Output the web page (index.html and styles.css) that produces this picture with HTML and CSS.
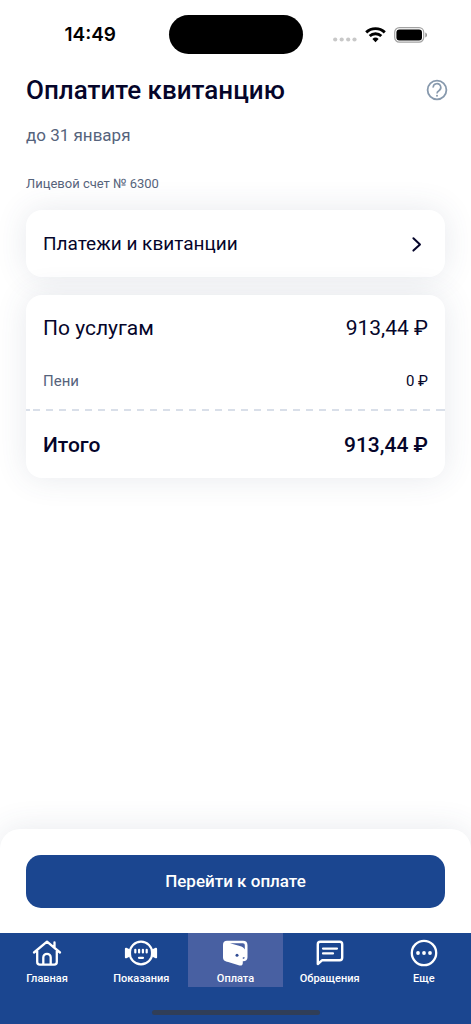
FILE: index.html
```html
<!DOCTYPE html>
<html lang="ru">
<head>
<meta charset="utf-8">
<meta name="viewport" content="width=device-width, initial-scale=1">
<title>Оплата</title>
<link rel="stylesheet" href="styles.css">
</head>
<body>
<div class="app">
  <div class="status">
    <time class="status-time">14:49</time>
    <div class="island"></div>
    <div class="status-icons">
      <svg class="signal" width="24" height="5" viewBox="0 0 24 5" aria-hidden="true"><circle cx="2.2" cy="2.5" r="2.1"/><circle cx="8.7" cy="2.5" r="2.1"/><circle cx="15.2" cy="2.5" r="2.1"/><circle cx="21.5" cy="2.5" r="2.1"/></svg>
      <svg width="21" height="16" viewBox="0 0 21 16" fill="none" stroke="#000" stroke-width="2.9" aria-hidden="true"><path d="M1.2 5.4a13.4 13.4 0 0 1 18.6 0"/><path d="M4.7 9a8.5 8.5 0 0 1 11.6 0"/><path d="M10.5 15.2 7.4 12a4.6 4.6 0 0 1 6.2 0z" fill="#000" stroke="none"/></svg>
      <svg width="34" height="16" viewBox="0 0 34 16" aria-hidden="true"><rect x=".7" y=".7" width="29" height="14.4" rx="4.6" fill="#fff" stroke="#a2a2a2" stroke-width="1.2"/><rect x="2.4" y="2.4" width="25.6" height="11" rx="3" fill="#000"/><path d="M31.3 5.4c2.3.8 2.3 4.2 0 5z" fill="#929292"/></svg>
    </div>
  </div>

  <main class="content">
    <header class="heading">
      <h1>Оплатите квитанцию</h1>
      <button class="help" type="button" aria-label="Помощь">
        <svg width="22" height="22" viewBox="0 0 22 22" fill="none" stroke="#8799ad" aria-hidden="true"><circle cx="11" cy="11" r="9.4" stroke-width="1.8"/><path d="M7.2 8.6a3.8 3.8 0 1 1 5.7 3.1c-1.3.8-1.9 1.3-1.9 2.8" stroke-width="1.6"/><circle cx="11" cy="16.7" r="1" fill="#8799ad" stroke="none"/></svg>
      </button>
    </header>
    <p class="due">до 31 января</p>
    <p class="account">Лицевой счет № 6300</p>

    <button class="card card-link" type="button">
      <span>Платежи и квитанции</span>
      <svg width="20" height="20" viewBox="0 0 20 20" fill="none" stroke="#05052a" stroke-width="2" stroke-linecap="round" stroke-linejoin="round" aria-hidden="true"><path d="m6.4 4.2 6.6 6.2-6.6 6.2"/></svg>
    </button>

    <dl class="card summary">
      <div class="row row-services"><dt>По услугам</dt><dd>913,44 ₽</dd></div>
      <div class="row row-fine"><dt>Пени</dt><dd>0 ₽</dd></div>
      <div class="divider"></div>
      <div class="row row-total"><dt>Итого</dt><dd>913,44 ₽</dd></div>
    </dl>
  </main>

  <div class="action">
    <button class="pay" type="button">Перейти к оплате</button>
  </div>

  <nav class="tabs">
    <div class="tab-list">
      <a class="tab" href="#home">
        <svg width="30" height="28" viewBox="0 0 30 28" fill="none" stroke="#fff" stroke-width="2.3" stroke-linecap="round" stroke-linejoin="round" aria-hidden="true"><path d="M2 13.5 15 2.6l13 10.9M22.5 8V3.5M5.2 12v11c0 1.700.9 2.600 2.600 2.600h14.400c1.700 0 2.600-.9 2.600-2.600V12M11.300 25.500v-7a3.700 3.700 0 0 1 7.400 0v7"/></svg>
        <span>Главная</span>
      </a>
      <a class="tab" href="#meters">
        <svg width="34" height="28" viewBox="0 0 34 28" fill="none" stroke="#fff" stroke-width="2.2" stroke-linecap="round" stroke-linejoin="round" aria-hidden="true"><circle cx="17" cy="14" r="11.3"/><path d="m2 9.8 4 2v4.4l-4 2zM32 9.8l-4 2v4.4l4 2z" fill="#fff"/><path d="M11.3 10.8v2.6M15.1 10.8v2.6M18.9 10.8v2.6M22.7 10.8v2.6M15 18.8h4"/></svg>
        <span>Показания</span>
      </a>
      <a class="tab tab-active" href="#payment" aria-current="page">
        <svg width="28" height="28" viewBox="0 0 28 28" aria-hidden="true"><path d="M6 1.8h16c2.900 0 4.500 1.500 4.500 4.400v12c0 2.700-1.600 4-4.400 4H5.600C3.300 22.200 2 20.600 2 18.400V5.800c0-2.500 1.500-4 4-4z" fill="#fff"/><path d="M9 4.200h12.600c1.600 0 2.200.8 2.200 2.200v4c-1-2.100-2.700-2.900-5-3.500z" fill="#4860a2"/><path d="M21.800 18.300h1.900c0 1.200-.5 1.700-1.900 1.700z" fill="#4860a2"/><path d="M19 22h7v4h-4.500z" fill="none"/><path d="M3 20h18.800v3.900c0 2-1.400 3.100-3.300 2.500L4.700 22.300z" fill="#fff"/><circle cx="16" cy="16.200" r="1.500" fill="#304c94"/></svg>
        <span>Оплата</span>
      </a>
      <a class="tab" href="#requests">
        <svg width="30" height="28" viewBox="0 0 30 28" fill="none" stroke="#fff" stroke-width="2.4" stroke-linecap="round" stroke-linejoin="round" aria-hidden="true"><path d="M2.800 25V5.200c0-1.700.9-2.500 2.500-2.500h19.400c1.600 0 2.500.8 2.500 2.500v13.600c0 1.700-.9 2.500-2.500 2.500H7z"/><path d="M8 9.600h14M8 14.400h10" stroke-width="2.2"/></svg>
        <span>Обращения</span>
      </a>
      <a class="tab" href="#more">
        <svg width="28" height="28" viewBox="0 0 28 28" fill="#fff" aria-hidden="true"><circle cx="14" cy="14" r="12.2" fill="none" stroke="#fff" stroke-width="2.3"/><circle cx="8" cy="14" r="1.9"/><circle cx="14" cy="14" r="1.9"/><circle cx="20" cy="14" r="1.9"/></svg>
        <span>Еще</span>
      </a>
    </div>
    <div class="home-indicator"></div>
  </nav>
</div>
</body>
</html>
```
FILE: styles.css
```css
* {
  box-sizing: border-box;
}

body {
  margin: 0;
  background: #fff;
  color: #05052a;
  font-family: Roboto, "Noto Sans", sans-serif;
}

button {
  border: 0;
  font: inherit;
  color: inherit;
  cursor: pointer;
}

svg {
  display: block;
}

.app {
  display: flex;
  flex-direction: column;
  min-height: 100vh;
}

.status {
  display: grid;
  grid-template-columns: 1fr auto 1fr;
  align-items: center;
  padding: 15px 0 0;
}

.status-time {
  padding-left: 12px;
  text-align: center;
  font: 600 19px/24px Inter, sans-serif;
  color: #000;
}

.island {
  width: 134px;
  height: 39px;
  border-radius: 20px;
  background: #000;
}

.status-icons {
  display: flex;
  align-items: center;
  justify-content: center;
  gap: 8px;
  padding-right: 12px;
}

.signal {
  margin-top: 10px;
  fill: #c8c8c8;
}

.content {
  flex: 1;
  padding: 18px 26px 40px;
}

.heading {
  display: flex;
  align-items: center;
  justify-content: space-between;
  margin-right: -3px;
}

h1 {
  margin: 0;
  font-size: 26px;
  line-height: 36px;
  font-weight: 500;
}

.help {
  padding: 0;
  background: none;
}

.due {
  margin: 15px 0 0;
  font-size: 17px;
  line-height: 24px;
  color: #56637c;
}

.account {
  margin: 28px 0 0;
  font-size: 13px;
  line-height: 18px;
  color: #56637c;
}

.card {
  width: 100%;
  border-radius: 16px;
  background: #fff;
  box-shadow: 0 0 32px rgba(60, 75, 105, 0.12);
}

.card-link {
  display: flex;
  align-items: center;
  justify-content: space-between;
  margin-top: 17px;
  padding: 20px 18px 20px 17px;
  font-size: 19px;
  line-height: 27px;
  text-align: left;
}

.summary {
  margin: 18px 0 0;
  padding: 18px 0;
}

.row {
  display: flex;
  align-items: center;
  justify-content: space-between;
  padding: 0 17px;
}

.row dd {
  margin: 0;
}

.row-services {
  font-size: 21px;
  line-height: 30px;
}

.row-fine {
  margin-top: 28px;
  font-size: 15px;
  line-height: 20px;
}

.row-fine dt {
  color: #56637c;
}

.divider {
  height: 2px;
  margin: 18px 0 19px;
  background:
    linear-gradient(#d9dfe9, #d9dfe9) 0 0 / 4px 2px no-repeat,
    linear-gradient(#d9dfe9, #d9dfe9) 100% 0 / 4px 2px no-repeat,
    linear-gradient(90deg, #d9dfe9 7px, transparent 7px) 7px 0 / 13px 2px;
}

.row-total {
  font-size: 21px;
  line-height: 30px;
  font-weight: 500;
}

.action {
  padding: 26px 26px 25px;
  border-radius: 20px 20px 0 0;
  background: #fff;
  box-shadow: 0 0 32px rgba(60, 75, 105, 0.12);
}

.pay {
  display: block;
  width: 100%;
  padding: 15px;
  border-radius: 15px;
  background: #1b4690;
  color: #fff;
  font-size: 17px;
  line-height: 23px;
  font-weight: 500;
}

.tabs {
  padding-bottom: 9px;
  background: #1b4690;
}

.tab-list {
  display: grid;
  grid-template-columns: repeat(5, 1fr);
}

.tab {
  display: flex;
  flex-direction: column;
  align-items: center;
  gap: 5px;
  padding: 6px 0 1px;
  color: #fff;
  font-size: 11px;
  line-height: 14px;
  font-weight: 500;
  text-decoration: none;
}

.tab-active {
  background: #4860a2;
}

.home-indicator {
  width: 168px;
  height: 5px;
  margin: 23px auto 0;
  border-radius: 3px;
  background: #303e58;
}
```
